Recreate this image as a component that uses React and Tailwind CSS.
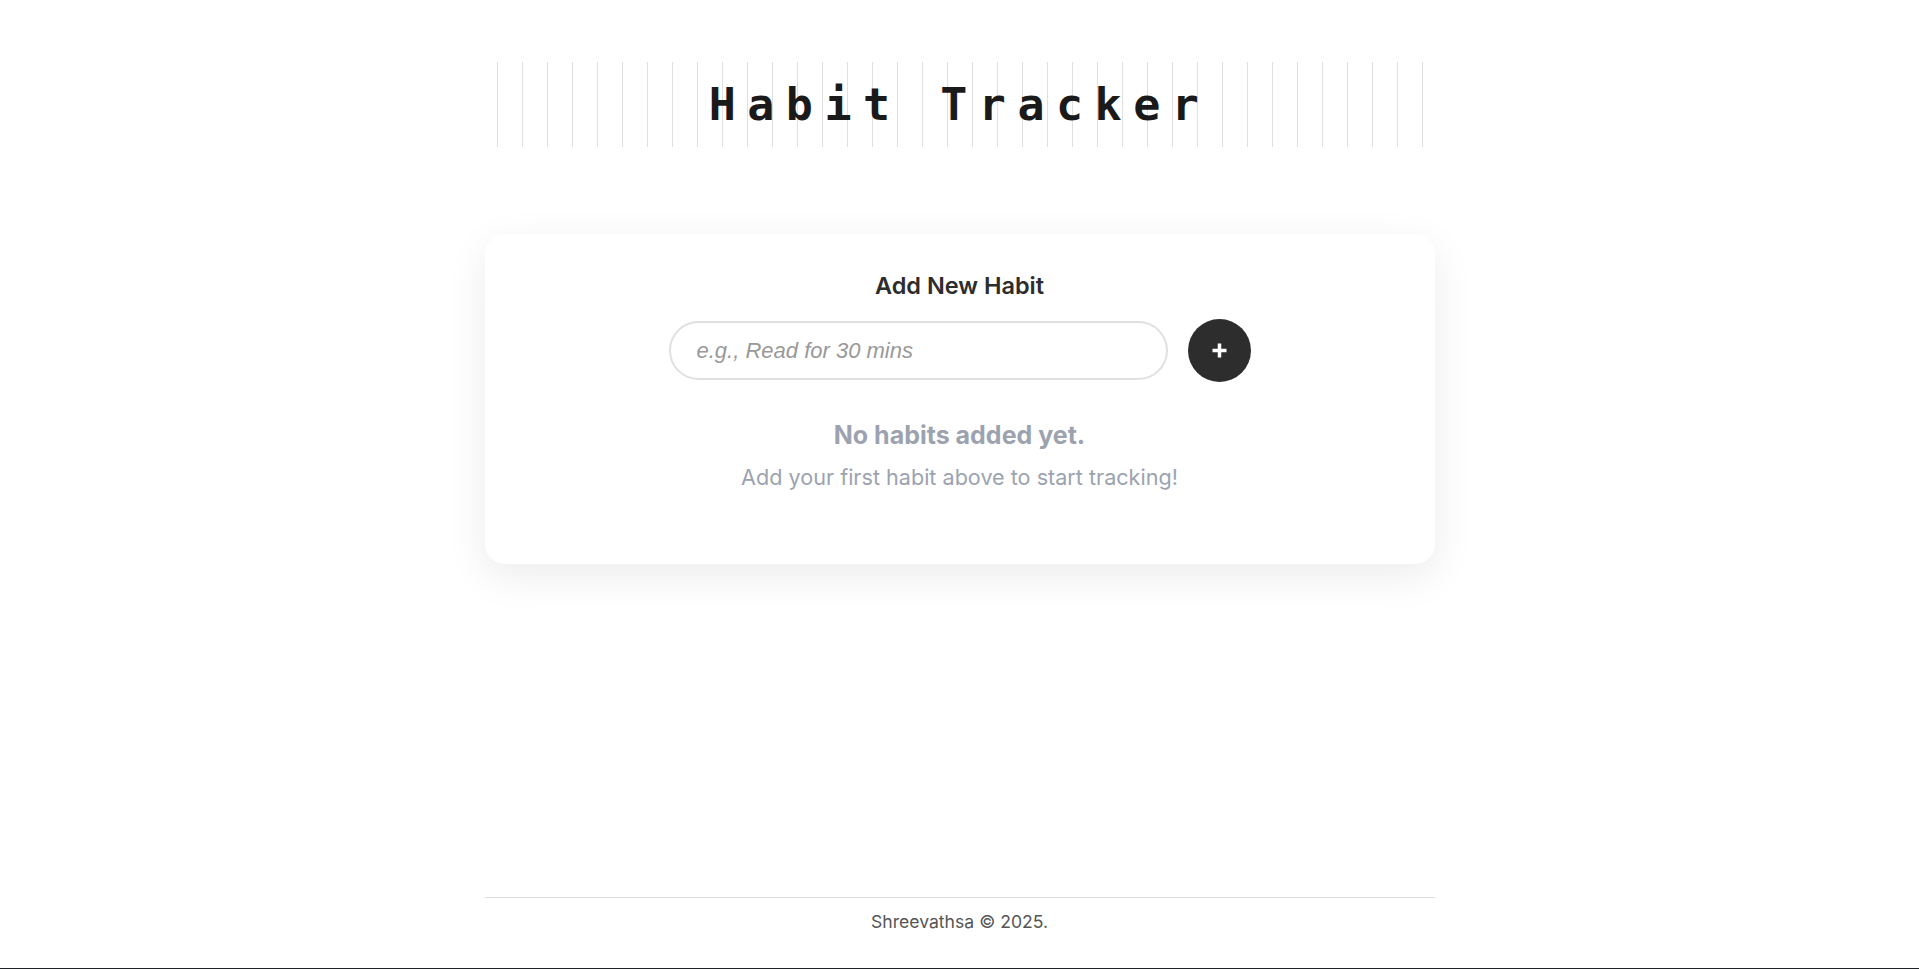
import React, { useState } from 'react';

const App = () => {
  const [habit, setHabit] = useState('');
  const [habits, setHabits] = useState([]);

  const handleAdd = (e) => {
    e.preventDefault();
    if (!habit.trim()) return;
    setHabits(prev => [...prev, { id: Date.now(), name: habit.trim(), done: false }]);
    setHabit('');
  };

  const toggleHabit = (id) => {
    setHabits(prev => prev.map(h => (h.id === id ? { ...h, done: !h.done } : h)));
  };

  const removeHabit = (id) => {
    setHabits(prev => prev.filter(h => h.id !== id));
  };

  return (
    <div className="min-h-screen flex flex-col bg-white border-b border-[#1f2328] font-['Inter',sans-serif]">
      <main className="w-full max-w-[950px] mx-auto pt-[62px] flex-1">
        {/* title */}
        <header className="h-[85px] flex items-center justify-center bg-[image:repeating-linear-gradient(90deg,transparent_0_12px,#e0e0e0_12px_13px,transparent_13px_25px)]">
          <h1 className="font-['DejaVu_Sans_Mono',monospace] text-[45px] leading-none font-bold tracking-[11.5px] text-[#1a1a1a]">
            Habit Tracker
          </h1>
        </header>

        {/* card */}
        <section className="mt-[87px] bg-white rounded-[20px] shadow-[0_12px_40px_rgba(0,0,0,0.08)] pt-[38px] pb-[72px] flex flex-col items-center">
          <h2 className="text-[23.5px] leading-7 font-semibold text-[#2d2d2d]">Add New Habit</h2>

          <form onSubmit={handleAdd} className="mt-[19px] flex items-center gap-5">
            <input
              type="text" value={habit} placeholder="e.g., Read for 30 mins"
              onChange={(e) => setHabit(e.target.value)}
              className="w-[499px] h-[59px] rounded-full border-2 border-[#e0e0e0] px-[26px] text-[22px] text-[#333] font-['Liberation_Sans',Arial,sans-serif] outline-none focus:border-[#bbb] placeholder:italic placeholder:text-[#999]"
            />
            <button type="submit" className="w-[63px] h-[63px] rounded-full bg-[#2d2d2d] hover:bg-black flex items-center justify-center">
              <svg width="17" height="17" viewBox="0 0 17 17">
                <path d="M8.5 1.5v14M1.5 8.5h14" stroke="#fff" strokeWidth="3.5" />
              </svg>
            </button>
          </form>

          {habits.length === 0 ? (
            <div className="mt-9 text-center">
              <p className="text-[25px] leading-[34px] font-bold text-[#9ca3af]">No habits added yet.</p>
              <p className="mt-[10px] text-[21.6px] leading-[30px] text-[#9ca3af]">Add your first habit above to start tracking!</p>
            </div>
          ) : (
            <ul className="mt-9 w-[582px] flex flex-col gap-3">
              {habits.map(h => (
                <li key={h.id} className="flex items-center gap-4 px-5 py-3 rounded-2xl border border-[#eee]">
                  <button type="button" onClick={() => toggleHabit(h.id)}
                    className={`w-6 h-6 rounded-full border-2 ${h.done ? 'bg-[#2d2d2d] border-[#2d2d2d]' : 'border-[#ccc]'}`} />
                  <span className={`flex-1 text-lg ${h.done ? 'line-through text-[#9ca3af]' : 'text-[#2d2d2d]'}`}>{h.name}</span>
                  <button type="button" onClick={() => removeHabit(h.id)} className="text-[#9ca3af] hover:text-[#2d2d2d] text-sm">✕</button>
                </li>
              ))}
            </ul>
          )}
        </section>
      </main>

      <footer className="w-full max-w-[950px] mx-auto border-t border-[#dddddd] pt-3 pb-[34px] text-center text-[17.6px] leading-6 text-[#555]">
        Shreevathsa © 2025.
      </footer>
    </div>
  );
};

export default App;
